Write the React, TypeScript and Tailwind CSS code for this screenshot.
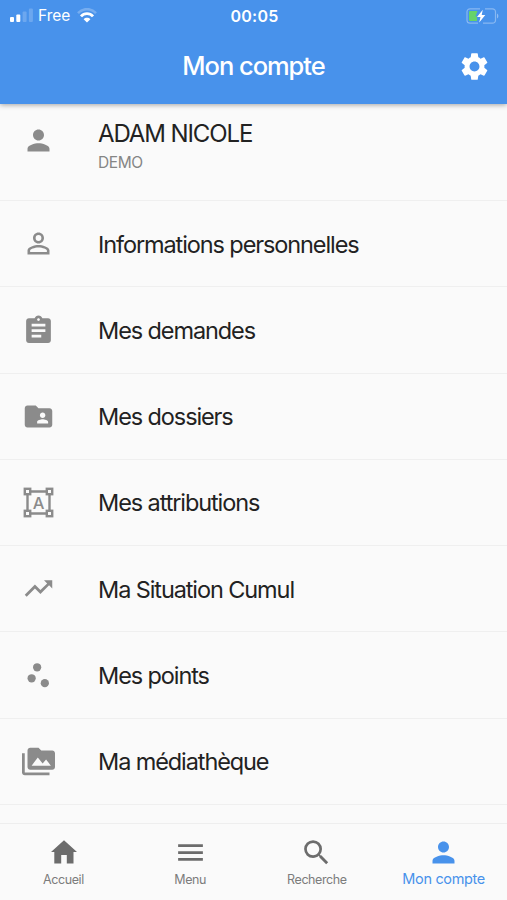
import { useState } from "react";
import type { ComponentType } from "react";
import {
    MdAssignment,
    MdFolderShared,
    MdMenu,
    MdPermMedia,
    MdPerson,
    MdPersonOutline,
    MdScatterPlot,
    MdSearch,
    MdSettings,
    MdTrendingUp,
} from "react-icons/md";

type IconProps = { size?: number; className?: string };
type IconType = ComponentType<IconProps>;

const ROWS: { label: string; icon: IconType }[] = [
    { label: "Informations personnelles", icon: MdPersonOutline },
    { label: "Mes demandes", icon: MdAssignment },
    { label: "Mes dossiers", icon: MdFolderShared },
    { label: "Mes attributions", icon: ShapesIcon },
    { label: "Ma Situation Cumul", icon: MdTrendingUp },
    { label: "Mes points", icon: MdScatterPlot },
    { label: "Ma médiathèque", icon: MdPermMedia },
];

const TABS: { label: string; icon: IconType }[] = [
    { label: "Accueil", icon: HomeIcon },
    { label: "Menu", icon: MdMenu },
    { label: "Recherche", icon: MdSearch },
    { label: "Mon compte", icon: MdPerson },
];

function HomeIcon({ size = 33, className }: IconProps) {
    return (
        <svg width={size} height={size} viewBox="0 0 33 33" fill="currentColor" className={className}>
            <path d="M17 4.2 30 16H26.5V27.5H19.8V19H14.2V27.5H7.3V16H4Z" />
        </svg>
    );
}

// Letter inside a frame with a handle on each corner
function ShapesIcon({ size = 33, className }: IconProps) {
    return (
        <svg width={size} height={size} viewBox="0 0 33 33" fill="none" stroke="currentColor" className={className}>
            <path d="M9 5.5h15M9 27.5h15M5.5 9v15M27.5 9v15" strokeWidth="2.4" />
            <g strokeWidth="2.4">
                <rect x="2.8" y="2.8" width="5.4" height="5.4" />
                <rect x="24.8" y="2.8" width="5.4" height="5.4" />
                <rect x="2.8" y="24.8" width="5.4" height="5.4" />
                <rect x="24.8" y="24.8" width="5.4" height="5.4" />
            </g>
            <text x="16.5" y="22.6" textAnchor="middle" fontSize="16.5" fontWeight="500" fill="currentColor" stroke="none">A</text>
        </svg>
    );
}

function StatusBar() {
    return (
        <div className="grid h-[31px] grid-cols-3 items-center pl-[10px] pr-2">
            <div className="flex items-center">
                <svg width="23" height="15" viewBox="0 0 23 15" fill="#fff">
                    <rect x="0" y="9" width="4" height="5" rx="1" />
                    <rect x="6.3" y="6.5" width="4" height="7.5" rx="1" />
                    <rect x="12.6" y="3.5" width="4" height="10.5" rx="1" opacity="0.2" />
                    <rect x="18.9" y="0.5" width="4" height="13.5" rx="1" opacity="0.2" />
                </svg>
                <span className="ml-[5px] text-[15.5px] leading-none">Free</span>
                <svg width="20" height="15" viewBox="0 0 20 15" fill="none" className="ml-[7px]">
                    <path d="M1 5.2C6-.2 14-.2 19 5.2" stroke="#fff" strokeWidth="2.6" opacity="0.25" />
                    <path d="M4 8.4c3.3-3.6 8.7-3.6 12 0" stroke="#fff" strokeWidth="2.8" />
                    <path d="M10 14.5 6.6 11.2c1.9-1.8 4.9-1.8 6.8 0Z" fill="#fff" />
                </svg>
            </div>
            <span className="text-center text-[16px] leading-none font-semibold tracking-[0.2px]">00:05</span>
            <svg width="33" height="16" viewBox="0 0 33 16" fill="none" className="justify-self-end">
                <path d="M14 .8H4a3 3 0 0 0-3 3v8.4a3 3 0 0 0 3 3h8M19 .8h7.5a3 3 0 0 1 3 3v8.4a3 3 0 0 1-3 3H17" stroke="#fff" strokeOpacity="0.35" strokeWidth="1.2" />
                <path d="M31 5.5c1.8.8 1.8 4.2 0 5Z" fill="#fff" fillOpacity="0.4" />
                <path d="M4 3h7.5l-2 5.5H11V13H4a1 1 0 0 1-1-1V4a1 1 0 0 1 1-1Z" fill="#66d36a" />
                <path d="M16.8 1.8 11 9h3.5l-1.3 5.5L19.3 7h-3.6Z" fill="#fff" />
            </svg>
        </div>
    );
}

export default function App() {
    const [active, setActive] = useState("Mon compte");

    return (
        <div className="flex h-[900px] w-full flex-col overflow-hidden bg-[#fafafa] font-['Inter','Liberation_Sans',sans-serif]">
            <header className="relative z-10 h-[103.5px] shrink-0 bg-[#4892eb] text-white shadow-[0_1px_5px_rgba(0,0,0,0.35)]">
                <StatusBar />
                <div className="grid h-[70px] grid-cols-[1fr_auto_1fr] items-center px-4">
                    <h1 className="col-start-2 text-[25.5px] font-medium tracking-[-1.05px]">Mon compte</h1>
                    <button aria-label="Paramètres" className="justify-self-end">
                        <MdSettings size={33} />
                    </button>
                </div>
            </header>

            <main className="min-h-0 flex-1 overflow-hidden text-[#222]">
                <div className="flex h-[97.7px] border-b border-[#efefef] pl-[22px]">
                    <MdPerson size={33} className="mt-[20.5px] shrink-0 text-[#8b8b8b]" />
                    <div className="ml-[43px] pt-[14px]">
                        <p className="text-[24px] leading-8 tracking-[-1.1px]">ADAM NICOLE</p>
                        <p className="mt-px text-[15.5px] leading-6 tracking-[-0.4px] text-[#858585]">DEMO</p>
                    </div>
                </div>
                {ROWS.map(({ label, icon: Icon }) => (
                    <div key={label} className="flex h-[86.25px] items-center border-b border-[#efefef] pl-[22px]">
                        <Icon size={33} className="shrink-0 text-[#8b8b8b]" />
                        <span className="ml-[43px] pt-px text-[23.5px] tracking-[-1.1px]">{label}</span>
                    </div>
                ))}
            </main>

            <nav className="grid h-[77px] shrink-0 grid-cols-4 border-t border-[#eee] bg-[#fafafa]">
                {TABS.map(({ label, icon: Icon }) => {
                    const selected = active === label;
                    return (
                        <button
                            key={label}
                            onClick={() => setActive(label)}
                            className={`flex flex-col items-center pt-[12px] ${selected ? "text-[#4892eb]" : "text-[#6c6c6c]"}`}
                        >
                            <Icon size={33} />
                            <span
                                className={selected
                                    ? "text-[14.5px] leading-5 tracking-[-0.35px]"
                                    : "mt-px text-[12.5px] leading-5 tracking-[-0.4px] text-[#7c7c7c]"}
                            >
                                {label}
                            </span>
                        </button>
                    );
                })}
            </nav>
        </div>
    );
}
